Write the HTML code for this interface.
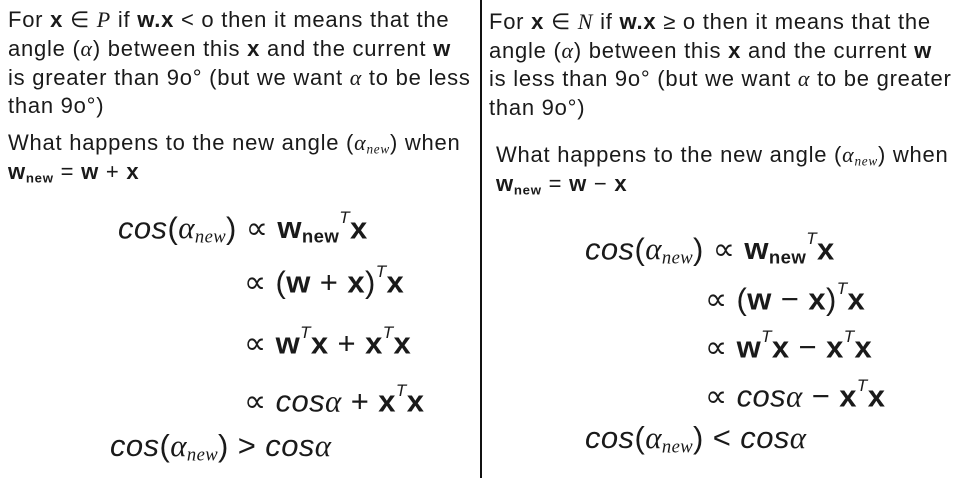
<!DOCTYPE html>
<html><head><meta charset="utf-8"><style>
body{margin:0;width:960px;height:490px;background:#fff;overflow:hidden;font-family:"Liberation Sans","DejaVu Sans",sans-serif;color:#1a1a1a;position:relative}
.t{position:absolute;font-size:22px;letter-spacing:0.75px;white-space:nowrap;line-height:1}
.e{position:absolute;font-size:31px;letter-spacing:0.4px;white-space:nowrap;line-height:1}
b{font-weight:bold}
i{font-family:"Liberation Serif",serif;font-style:italic}
.c{font-style:italic}
sub{font-size:0.6em;vertical-align:-0.25em}
sup{font-size:0.55em;vertical-align:0.9em;font-style:italic}
#div{position:absolute;left:480px;top:0;width:2px;height:478px;background:#111}
</style></head><body>
<div id="div"></div>

<div class="t" style="left:8px;top:9px">For <b>x</b> ∈ <i>P</i> if <b>w.x</b> &lt; o then it means that the</div>
<div class="t" style="left:8px;top:38px">angle (<i>α</i>) between this <b>x</b> and the current <b>w</b></div>
<div class="t" style="left:8px;top:67px">is greater than 9o° (but we want <i>α</i> to be less</div>
<div class="t" style="left:8px;top:95px">than 9o°)</div>
<div class="t" style="left:8px;top:132px">What happens to the new angle (<i>α<sub>new</sub></i>) when</div>
<div class="t" style="left:8px;top:161px"><b>w<sub>new</sub></b> = <b>w</b> + <b>x</b></div>

<div class="e" style="left:118px;top:209px"><span class="c">cos</span>(<i>α<sub>new</sub></i>) ∝ <b>w<sub>new</sub></b><sup>T</sup><b>x</b></div>
<div class="e" style="left:244px;top:263px">∝ (<b>w</b> + <b>x</b>)<sup>T</sup><b>x</b></div>
<div class="e" style="left:244px;top:324px">∝ <b>w</b><sup>T</sup><b>x</b> + <b>x</b><sup>T</sup><b>x</b></div>
<div class="e" style="left:244px;top:382px">∝ <span class="c">cos</span><i>α</i> + <b>x</b><sup>T</sup><b>x</b></div>
<div class="e" style="left:110px;top:430px"><span class="c">cos</span>(<i>α<sub>new</sub></i>) &gt; <span class="c">cos</span><i>α</i></div>

<div class="t" style="left:489px;top:11px">For <b>x</b> ∈ <i>N</i> if <b>w.x</b> ≥ o then it means that the</div>
<div class="t" style="left:489px;top:40px">angle (<i>α</i>) between this <b>x</b> and the current <b>w</b></div>
<div class="t" style="left:489px;top:68px">is less than 9o° (but we want <i>α</i> to be greater</div>
<div class="t" style="left:489px;top:97px">than 9o°)</div>
<div class="t" style="left:496px;top:144px">What happens to the new angle (<i>α<sub>new</sub></i>) when</div>
<div class="t" style="left:496px;top:173px"><b>w<sub>new</sub></b> = <b>w</b> − <b>x</b></div>

<div class="e" style="left:585px;top:230px"><span class="c">cos</span>(<i>α<sub>new</sub></i>) ∝ <b>w<sub>new</sub></b><sup>T</sup><b>x</b></div>
<div class="e" style="left:705px;top:280px">∝ (<b>w</b> − <b>x</b>)<sup>T</sup><b>x</b></div>
<div class="e" style="left:705px;top:328px">∝ <b>w</b><sup>T</sup><b>x</b> − <b>x</b><sup>T</sup><b>x</b></div>
<div class="e" style="left:705px;top:377px">∝ <span class="c">cos</span><i>α</i> − <b>x</b><sup>T</sup><b>x</b></div>
<div class="e" style="left:585px;top:422px"><span class="c">cos</span>(<i>α<sub>new</sub></i>) &lt; <span class="c">cos</span><i>α</i></div>
</body></html>
